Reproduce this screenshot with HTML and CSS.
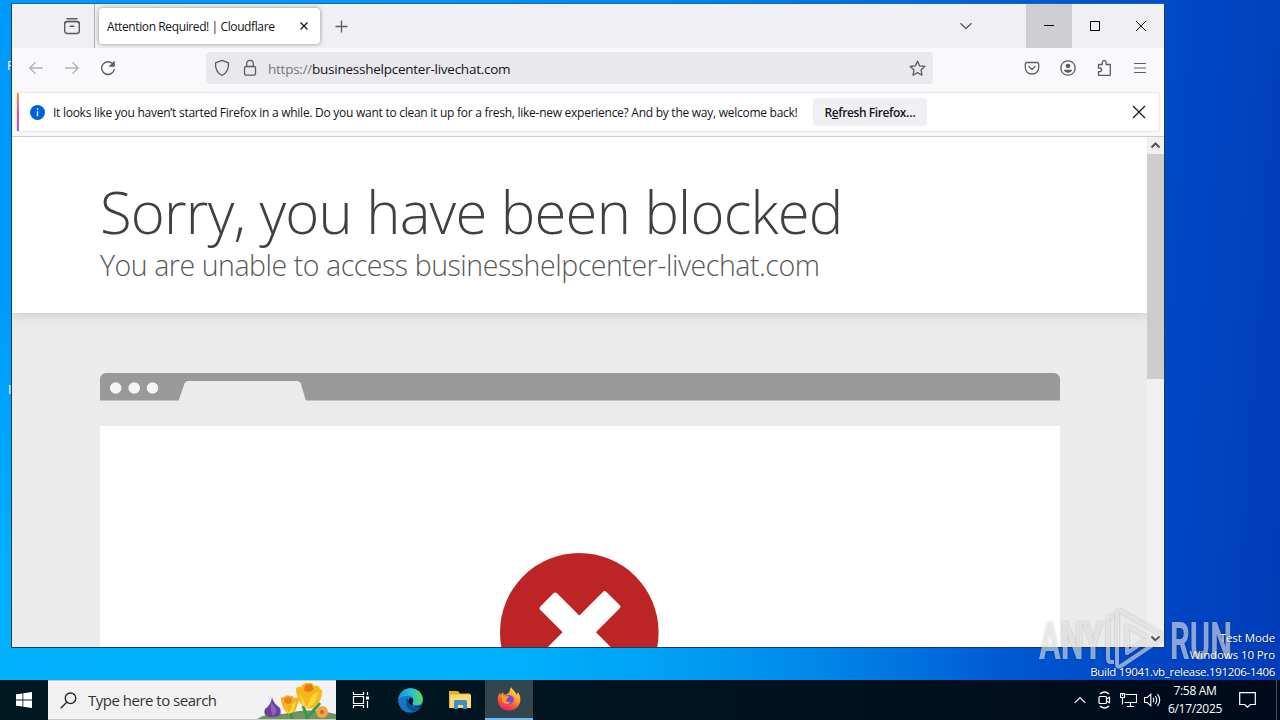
FILE: index.html
```html
<!DOCTYPE html>
<html lang="en">
<head>
  <meta charset="UTF-8">
  <meta name="viewport" content="width=device-width, initial-scale=1.0">
  <title>Attention Required! | Cloudflare</title>
  <link rel="stylesheet" href="styles.css">
</head>
<body>
  <div class="desktop">
    <span class="desktop-label label-one">F</span>
    <span class="desktop-label label-two">I</span>

    <div class="window">
      <div class="tab-bar">
        <div class="tab-history">
          <svg width="18" height="18" viewBox="0 0 18 18" fill="none" stroke="#5b5b66" stroke-width="1.4" stroke-linecap="round"><path d="M4 1.700h10"/><rect x="1.700" y="4.500" width="14.600" height="12" rx="2.500"/><path d="M1.700 6.500q0-2 2.500-2h9.600q2.500 0 2.500 2M7.200 9.200h3.600"/></svg>
        </div>
        <div class="tab">
          <span class="tab-title">Attention Required! | Cloudflare</span>
          <svg width="8" height="8" viewBox="0 0 8 8" stroke="#15141a" stroke-width="1.3"><path d="M.5 .5l7 7M7.500 .5l-7 7"/></svg>
        </div>
        <svg class="new-tab" width="13" height="13" viewBox="0 0 13 13" stroke="#5b5b66" stroke-width="1.3"><path d="M6.500 .5v12M.5 6.500h12"/></svg>
        <svg class="tab-list" width="14" height="8" viewBox="0 0 14 8" fill="none" stroke="#5b5b66" stroke-width="1.3"><path d="M1.500 1.200l5.500 5.300 5.500-5.300"/></svg>
        <div class="window-button minimize"><svg width="10" height="10" viewBox="0 0 10 10" stroke="#000"><path d="M0 4.500h10"/></svg></div>
        <div class="window-button"><svg width="10" height="10" viewBox="0 0 10 10" fill="none" stroke="#000"><path d="M.5 .5h9v9h-9z"/></svg></div>
        <div class="window-button"><svg width="10" height="10" viewBox="0 0 10 10" stroke="#000" stroke-width=".9"><path d="M0 0l10 10M10 0L0 10"/></svg></div>
      </div>

      <div class="nav-bar">
        <div class="nav-buttons">
          <svg class="disabled" width="16" height="16" viewBox="0 0 16 16" fill="none" stroke="#5b5b66" stroke-width="1.3"><path d="M15 8H1.800M7.500 2.300L1.800 8l5.700 5.700"/></svg>
          <svg class="disabled" width="16" height="16" viewBox="0 0 16 16" fill="none" stroke="#5b5b66" stroke-width="1.3"><path d="M1 8h13.200M8.500 2.300L14.200 8l-5.700 5.700"/></svg>
          <svg width="16" height="16" viewBox="0 0 16 16" fill="none" stroke="#5b5b66" stroke-width="1.400"><path d="M13.200 4.300A6.400 6.400 0 1 0 14.400 9"/><path d="M14.300 1.300v5H9.300z" fill="#5b5b66" stroke-width=".8"/></svg>
        </div>
        <div class="url-bar">
          <svg width="16" height="18" viewBox="0 0 16 18" fill="none" stroke="#5b5b66" stroke-width="1.300" stroke-linejoin="round"><path d="M8 1.400l6.500 2.500c.3 5.500-1.300 10-6.500 12.600C2.800 13.900 1.200 9.400 1.500 3.900z"/></svg>
          <svg class="lock" width="14" height="18" viewBox="0 0 14 18" fill="none" stroke="#5b5b66" stroke-width="1.300"><rect x="1.500" y="7.500" width="11" height="8.700" rx="1.600"/><path d="M3.700 7.500V4.600a3.300 3.300 0 0 1 6.600 0v2.900"/></svg>
          <span class="url"><span class="scheme">https://</span>businesshelpcenter-livechat.com</span>
          <svg class="star" width="17" height="17" viewBox="0 0 17 17" fill="none" stroke="#5b5b66" stroke-width="1.300" stroke-linejoin="round"><path d="M8.500 1.200l2.200 4.700 5.100.6-3.800 3.500 1 5.200-4.500-2.600L4 15.200l1-5.200L1.200 6.500l5.100-.6z"/></svg>
        </div>
        <div class="nav-tools">
          <svg width="16" height="16" viewBox="0 0 16 16" fill="none" stroke="#5b5b66" stroke-width="1.300" stroke-linecap="round" stroke-linejoin="round"><path d="M2.800 2.500h10.400a1.500 1.500 0 0 1 1.500 1.500v3.600c0 3.700-2.800 6.400-6.700 6.400S1.300 11.300 1.300 7.600V4a1.500 1.500 0 0 1 1.500-1.500z"/><path d="M4.800 6.400L8 9.500l3.200-3.100"/></svg>
          <svg width="16" height="16" viewBox="0 0 16 16" fill="none" stroke="#5b5b66" stroke-width="1.300"><circle cx="8" cy="8" r="7.200"/><circle cx="8" cy="6" r="2.300" fill="#5b5b66" stroke="none"/><path d="M3.800 9.700h8.400c-.5 2-2.100 3-4.200 3s-3.700-1-4.200-3z" fill="#5b5b66" stroke="none"/></svg>
          <svg width="16" height="16" viewBox="0 0 16 16" fill="none" stroke="#5b5b66" stroke-width="1.300" stroke-linejoin="round"><path d="M2.500 7V4.500h3.800V2.500a1.900 1.900 0 0 1 3.800 0v2h4.200v10.800H2.500v-3.600h1.700a1.900 1.900 0 0 0 0-3.700H2.500z"/></svg>
          <svg class="menu" width="14" height="16" viewBox="0 0 14 16" stroke="#5b5b66" stroke-width="1.200"><path d="M1 3.500h12M1 8h12M1 12.500h12"/></svg>
        </div>
      </div>

      <div class="notification">
        <svg class="info" width="15" height="15" viewBox="0 0 15 15"><circle cx="7.500" cy="7.500" r="7.500" fill="#0060df"/><path d="M7.500 3.300v1.500M7.500 6.200v5" stroke="#fff" stroke-width="1.300"/></svg>
        <span class="message">It looks like you haven’t started Firefox in a while. Do you want to clean it up for a fresh, like-new experience? And by the way, welcome back!</span>
        <button class="refresh">R<u>e</u>fresh Firefox…</button>
        <svg class="dismiss" width="14" height="14" viewBox="0 0 14 14" stroke="#15141a" stroke-width="1.200"><path d="M1 1l12 12M13 1L1 13"/></svg>
      </div>

      <div class="viewport">
        <div class="page">
          <div class="page-header">
            <h1>Sorry, you have been blocked</h1>
            <h2>You are unable to access businesshelpcenter-livechat.com</h2>
          </div>
          <div class="screenshot">
            <svg class="browser-bar" width="960" height="28" viewBox="0 0 960 28"><path d="M0 27.500V6a6 6 0 0 1 6-6h948a6 6 0 0 1 6 6v21.500z" fill="#999"/><path d="M78.500 28l6-17.500q1-2.500 3.500-2.500h109q3 0 3.800 2.500l5.200 17.500z" fill="#ebebeb"/><g fill="#f5f5f5"><circle cx="15.700" cy="15" r="5.800"/><circle cx="34.200" cy="15" r="5.800"/><circle cx="52.500" cy="15" r="5.800"/></g></svg>
            <div class="browser-body">
              <svg width="160" height="160" viewBox="0 0 160 160"><circle cx="79.300" cy="79.300" r="79.300" fill="#bd2426"/><g fill="#fff"><rect x="33.500" y="67.500" width="92" height="23.500" rx="2.500" transform="rotate(45 79.300 79.300)"/><rect x="32" y="67.500" width="95" height="23.500" rx="2.500" transform="rotate(-45 79.300 79.300)"/></g></svg>
            </div>
          </div>
        </div>
        <div class="scrollbar">
          <svg width="17" height="17" viewBox="0 0 17 17" fill="none" stroke="#505050" stroke-width="2"><path d="M4.500 10.500l4-4 4 4"/></svg>
          <div class="thumb"></div>
          <svg class="scroll-down" width="17" height="17" viewBox="0 0 17 17" fill="none" stroke="#505050" stroke-width="2"><path d="M4.500 6.500l4 4 4-4"/></svg>
        </div>
      </div>
    </div>

    <svg class="watermark" width="200" height="64" viewBox="0 0 200 64">
      <g class="watermark-text">
        <text x="2" y="51" textLength="64" lengthAdjust="spacingAndGlyphs">ANY</text>
        <text x="133" y="51" textLength="62" lengthAdjust="spacingAndGlyphs">RUN</text>
      </g>
      <g fill="none" stroke="#fff" stroke-opacity=".55" stroke-width="4" stroke-linejoin="round">
        <path d="M84 3l39 23q4 3 0 6L84 58q-4 2-4-2V6q0-5 4-3z"/>
        <path d="M77 9h-3q-3 0-3 4v37q0 4 3 4h3M90 18v27l22-15z"/>
      </g>
    </svg>

    <div class="build-info">
      <span class="mode">Test Mode</span>
      <span class="edition">Windows 10 Pro</span>
      <span class="build">Build 19041.vb_release.191206-1406</span>
    </div>
  </div>

  <div class="taskbar">
    <div class="start"><svg width="16" height="16" viewBox="0 0 16 16" fill="#fff"><path d="M0 2.300l6.500-.9v6.200H0zM7.300 1.300L16 0v7.600H7.300zM0 8.400h6.500v6.200L0 13.700zM7.300 8.400H16V16l-8.700-1.300z"/></svg></div>
    <div class="search">
      <svg width="17" height="17" viewBox="0 0 17 17" fill="none" stroke="#222" stroke-width="1.300"><circle cx="10.500" cy="6.300" r="5.300"/><path d="M6.700 10.200L.7 16.300"/></svg>
      <span>Type here to search</span>
      <svg class="flowers" width="82" height="38" viewBox="0 0 82 38">
        <path d="M3 38q12-7 27-5 22-7 52 0v5z" fill="#71945e"/>
        <path d="M38 38l-2-9M54 38l-5-13M52 38l14-16" stroke="#2f9b4b" stroke-width="3" fill="none"/>
        <path d="M18 16q1 6 8 11 3 9-7 9-11 0-8-8 6-4 7-12z" fill="#67429a"/><path d="M17 21q-1 8 2 14 5-4 2-9z" fill="#8f63bd"/>
        <path d="M27 19q-1-3 3-3 3-3 6-1 3-1 4 2 4-1 5 1-1 6-4 12-5 4-9 1-4-5-5-12z" fill="#f6b01c"/><path d="M30 23l5 9 4-9 3-3-3 11-5 2z" fill="#ffd83b"/><path d="M31 17l4-1 3 2-1 4-4 1-3-3z" fill="#e4821a"/>
        <path d="M42 9q0-4 5-3 3-5 7-4 4-1 6 3 5-1 6 3 3 1 2 4-1 9-7 14-6 3-11 0-7-6-8-17z" fill="#f8b51c"/><path d="M46 13l7 13 6-13 6-2-5 12-7 5-5-5z" fill="#ffd83b"/><path d="M51 4l6-1 3 5-4 3-6-1z" fill="#e47c10"/>
        <circle cx="68" cy="31" r="6" fill="#f2a548"/><circle cx="68" cy="31" r="2" fill="#c06a24"/>
      </svg>
    </div>
    <div class="task task-view"><svg width="18" height="18" viewBox="0 0 18 18" fill="none" stroke="#fff" stroke-width="1.200"><path d="M1.500 1v2.500h10V1M1.500 17v-2.500h10V17M1.500 5.500h10v7h-10zM15.500 1v3M15.500 10v7"/><path d="M14 5.500h3v3h-3z" fill="#fff" stroke="none"/></svg></div>
    <div class="task">
      <svg width="25" height="25" viewBox="0 0 24 24">
        <defs>
          <linearGradient id="edge-top" x1="0" x2="1"><stop offset="0" stop-color="#1797d5"/><stop offset=".55" stop-color="#27bfd0"/><stop offset="1" stop-color="#62d754"/></linearGradient>
          <linearGradient id="edge-low" x1="0" y1="0" x2="0" y2="1"><stop offset="0" stop-color="#1580d0"/><stop offset="1" stop-color="#1272c4"/></linearGradient>
        </defs>
        <circle cx="12" cy="12" r="11.800" fill="url(#edge-low)"/>
        <path d="M.3 11C1 4.500 6 .2 12 .2c7 0 11.800 5 11.800 10.300 0 4-3 6-6 6-3.200 0-4.500-1.400-3.500-2.800 2-3.700-1-6.200-4-6.200-4 0-8 1-10 3.500z" fill="url(#edge-top)"/>
        <path d="M9 9.500c-3 5 0 12 7 13.200 3-1 5-3 6-5-6 3-12 0-11.500-5.500z" fill="#104b8c"/>
        <path d="M12 9c-4 3-1 8 4 8.500 3 .2 5 .2 8-1.500v1.500c-2 .8-4 1-6 .9-3 0-5.500-2.300-3.700-4.700 1-2.500 0-4-2.300-4.700z" fill="#001821"/>
      </svg>
    </div>
    <div class="task"><svg width="22" height="20" viewBox="0 0 22 20"><path d="M0 1h9l2 2.500h10V18H0z" fill="#eba91e"/><path d="M1 4.500h21V18H1z" fill="#ffda70"/><path d="M5 19v-7.500q0-1.500 1.500-1.500h10q1.500 0 1.500 1.500V19h-4v-4H9v4z" fill="#3c8fc7"/></svg></div>
    <div class="task active">
      <svg width="24" height="24" viewBox="0 0 24 24">
        <defs><linearGradient id="fox" x1=".8" y1="0" x2=".3" y2="1"><stop offset="0" stop-color="#ffe84a"/><stop offset=".45" stop-color="#ff9728"/><stop offset=".75" stop-color="#ff4a3d"/><stop offset="1" stop-color="#e62079"/></linearGradient></defs>
        <path d="M12 23.500C5 23.500.7 18.500.7 12.500c0-3 1.200-5.500 2.500-7L3.500 8 6 5l.5 2.500h3L12.500 5c.2-2 1-4 2-4.700.4 2.700 5 4.700 5 8l1.200-3C23 8 23.400 10 23.400 12.500c0 6-4.600 11-11.400 11z" fill="url(#fox)"/>
        <path d="M7 10c2-2 5-3 8-1 3 1.700 2.500 7-2 8.300-4 .7-6.500-2-6-5.300z" fill="#7549d9"/><path d="M5 9.500l6-.5c1 0 1 1.500-1 2.500l-1 2c1 2 3 2 5 1-1 3-7 4-9-1z" fill="#ff9f20"/>
      </svg>
    </div>
    <div class="tray">
      <svg class="tray-up" width="12" height="8" viewBox="0 0 12 8" fill="none" stroke="#fff" stroke-width="1.200"><path d="M.7 6.800L6 1.500l5.300 5.300"/></svg>
      <svg class="tray-meet" width="13" height="18" viewBox="0 0 13 18" fill="none" stroke="#fff" stroke-width="1.200"><path d="M2 3q4.500-4 9 0M2 15q4.500 4 9 0"/><rect x="1" y="5.500" width="7.500" height="7" rx="1"/><path d="M8.500 8l3-1.700v5.400l-3-1.700"/></svg>
      <svg class="tray-net" width="17" height="16" viewBox="0 0 17 16" fill="none" stroke="#fff" stroke-width="1.100"><path d="M5.500 2.500h11v8h-12M10.500 10.500v3.500M7 14.500h7M.5 1.500h4v4h-4zM2.500 5.500v7M2.500 1.500V4"/></svg>
      <svg class="tray-sound" width="17" height="14" viewBox="0 0 17 14" fill="none" stroke="#fff" stroke-width="1.100"><path d="M.6 4.500h2.700l3.500-3.300v11.600L3.300 9.500H.6zM9 4.800q1.500 2.200 0 4.400M11.300 3q2.800 4 0 8M13.500 1.200q4.400 5.800 0 11.600"/></svg>
      <div class="clock"><span>7:58 AM</span><span>6/17/2025</span></div>
      <svg class="tray-action" width="17" height="16" viewBox="0 0 17 16" fill="none" stroke="#fff" stroke-width="1.200"><path d="M.7 .7h15.600v11.800h-5L8.500 15.200l-2.800-2.700h-5z"/></svg>
      <div class="show-desktop"></div>
    </div>
  </div>
</body>
</html>
```

FILE: styles.css
```css
* {
  box-sizing: border-box;
}

body {
  font-family: "Open Sans", "Noto Sans", sans-serif;
  margin: 0;
  width: 1280px;
  height: 720px;
  overflow: hidden;
}

svg {
  display: block;
  flex: none;
}

.desktop {
  position: relative;
  height: 680px;
  background:
    radial-gradient(ellipse 760px 420px at 240px 680px, #00b2fc 30%, rgba(0, 170, 250, 0) 100%),
    linear-gradient(94deg, #009afa 0%, #0098f5 25%, #0088ea 50%, #0068dc 70%, #0047c6 90%, #003cb8 100%);
}

.desktop-label {
  position: absolute;
  left: 7px;
  width: 4px;
  overflow: hidden;
  color: #fff;
  font-size: 12px;
  line-height: 16px;
}

.label-one {
  top: 58px;
}

.label-two {
  top: 382px;
  left: 8px;
}

/* browser window */
.window {
  position: absolute;
  left: 11px;
  top: 3px;
  width: 1154px;
  height: 645px;
  display: flex;
  flex-direction: column;
  border: 1px solid #1c3c5a;
  border-top-color: #1868b0;
  background: #f9f9fb;
}

.tab-bar {
  display: flex;
  align-items: center;
  height: 44px;
  background: #f0f0f4;
}

.tab-history {
  display: flex;
  align-items: center;
  width: 83px;
  height: 44px;
  padding-left: 51px;
  border-right: 1px solid #b0b0b6;
}

.tab {
  display: flex;
  align-items: center;
  justify-content: space-between;
  width: 221px;
  height: 36px;
  margin-left: 4px;
  padding: 0 12px 0 8px;
  border-radius: 4px;
  background: #fff;
  box-shadow: 0 0 4px rgba(0, 0, 0, 0.4);
}

.tab-title {
  font-size: 12px;
  letter-spacing: -0.39px;
  color: #15141a;
  white-space: nowrap;
}

.new-tab {
  margin-left: 15px;
}

.tab-list {
  margin-left: auto;
  margin-right: 53px;
}

.window-button {
  display: flex;
  align-items: center;
  justify-content: center;
  width: 46px;
  height: 44px;
}

.minimize {
  background: #cfcfd3;
}

.nav-bar {
  display: flex;
  align-items: center;
  height: 40px;
}

.nav-buttons {
  display: flex;
  gap: 20px;
  width: 194px;
  padding-left: 16px;
}

.disabled {
  opacity: 0.45;
}

.url-bar {
  display: flex;
  align-items: center;
  width: 727px;
  height: 32px;
  padding: 0 7px 0 8px;
  border-radius: 4px;
  background: #e9e9ed;
}

.lock {
  margin-left: 13px;
}

.url {
  margin-left: 11px;
  padding-top: 1px;
  font-size: 13.5px;
  letter-spacing: -0.25px;
  color: #15141a;
}

.scheme {
  color: #77767c;
}

.star {
  margin-left: auto;
}

.nav-tools {
  display: flex;
  gap: 20px;
  margin-left: 91px;
}

.menu {
  margin-left: 1px;
}

.notification {
  display: flex;
  align-items: center;
  height: 38px;
  margin: 5px 5px 5px;
  padding: 0 13px 0 11px;
  border-left: 2px solid;
  border-image: linear-gradient(#f5a34a, #e0529c 50%, #8a5bf0) 1;
  background: #fff;
  box-shadow: 0 0 2px rgba(0, 0, 0, 0.2);
}

.message {
  margin-left: 8px;
  width: 760px;
  font-size: 12px;
  letter-spacing: -0.265px;
  color: #15141a;
  white-space: nowrap;
}

.refresh {
  width: 114px;
  height: 28px;
  padding: 0;
  border: 0;
  border-radius: 4px;
  background: #f0f0f4;
  color: #15141a;
  font: 600 12px "Open Sans", sans-serif;
  letter-spacing: -0.42px;
}

.dismiss {
  margin-left: auto;
}

.viewport {
  display: flex;
  height: 511px;
  border-top: 1px solid #ccccd1;
}

/* block page */
.page {
  width: 1135px;
  overflow: hidden;
  background: #ebebeb;
}

.page-header {
  height: 176px;
  padding: 39px 0 0 88px;
  background: #fff;
  box-shadow: 0 0 12px rgba(0, 0, 0, 0.2);
}

h1,
h2 {
  margin: 0;
  font-weight: 300;
  white-space: nowrap;
}

h1 {
  font-size: 58px;
  line-height: 72px;
  letter-spacing: -0.79px;
  color: #404040;
}

h2 {
  font-size: 28.5px;
  line-height: 35px;
  letter-spacing: -0.45px;
  color: #595959;
}

.screenshot {
  width: 960px;
  margin: 60px 0 0 88px;
}

.browser-body {
  display: flex;
  justify-content: center;
  height: 400px;
  margin-top: 25px;
  padding-top: 127px;
  background: #fff;
}

.scrollbar {
  display: flex;
  flex-direction: column;
  width: 17px;
  background: #f0f0f0;
}

.thumb {
  height: 225px;
  background: #cdcdcd;
}

.scroll-down {
  margin-top: auto;
}

.build-info {
  position: absolute;
  right: 5px;
  top: 629px;
  display: flex;
  flex-direction: column;
  align-items: flex-end;
  color: #fff;
  font-size: 11.5px;
  line-height: 17px;
  text-shadow: 0 0 2px rgba(0, 0, 0, 0.6);
  letter-spacing: -0.1px;
}

.build {
  letter-spacing: -0.31px;
}

.watermark {
  position: absolute;
  left: 1037px;
  top: 608px;
  filter: drop-shadow(0 0 1px rgba(0, 0, 0, 0.4));
}

.watermark-text {
  fill: #fff;
  fill-opacity: 0.55;
  font-family: Roboto, sans-serif;
  font-size: 51px;
  font-weight: 700;
}

/* taskbar */
.taskbar {
  display: flex;
  align-items: center;
  height: 40px;
  background: linear-gradient(to right, #001820, #001420 50%, #000a1c);
}

.start {
  display: flex;
  justify-content: center;
  width: 48px;
}

.search {
  display: flex;
  align-items: center;
  width: 288px;
  height: 40px;
  padding-left: 12px;
  border: 1px solid #c8c8c8;
  border-width: 1px 0;
  background: #f2f2f2;
  font-size: 15px;
  letter-spacing: -0.5px;
  color: #333;
}

.search span {
  margin-left: 11px;
}

.flowers {
  margin-left: auto;
}

.task {
  display: flex;
  align-items: center;
  justify-content: center;
  width: 50px;
  height: 40px;
}

.task-view {
  width: 49px;
}

.active {
  width: 48px;
  border-bottom: 2px solid #76b9ed;
  background: #324650;
}

.tray {
  display: flex;
  align-items: center;
  height: 40px;
  margin-left: auto;
  padding-right: 3px;
  color: #fff;
  font-size: 12px;
}

.tray-meet {
  margin-left: 12px;
}

.tray-net {
  margin-left: 9px;
}

.tray-sound {
  margin-left: 7px;
}

.clock {
  display: flex;
  flex-direction: column;
  align-items: center;
  width: 56px;
  margin: 0 16px 0 6px;
  line-height: 18px;
  letter-spacing: -0.3px;
}

.show-desktop {
  width: 1px;
  height: 40px;
  margin-left: 20px;
  background: #4a5260;
}
```
